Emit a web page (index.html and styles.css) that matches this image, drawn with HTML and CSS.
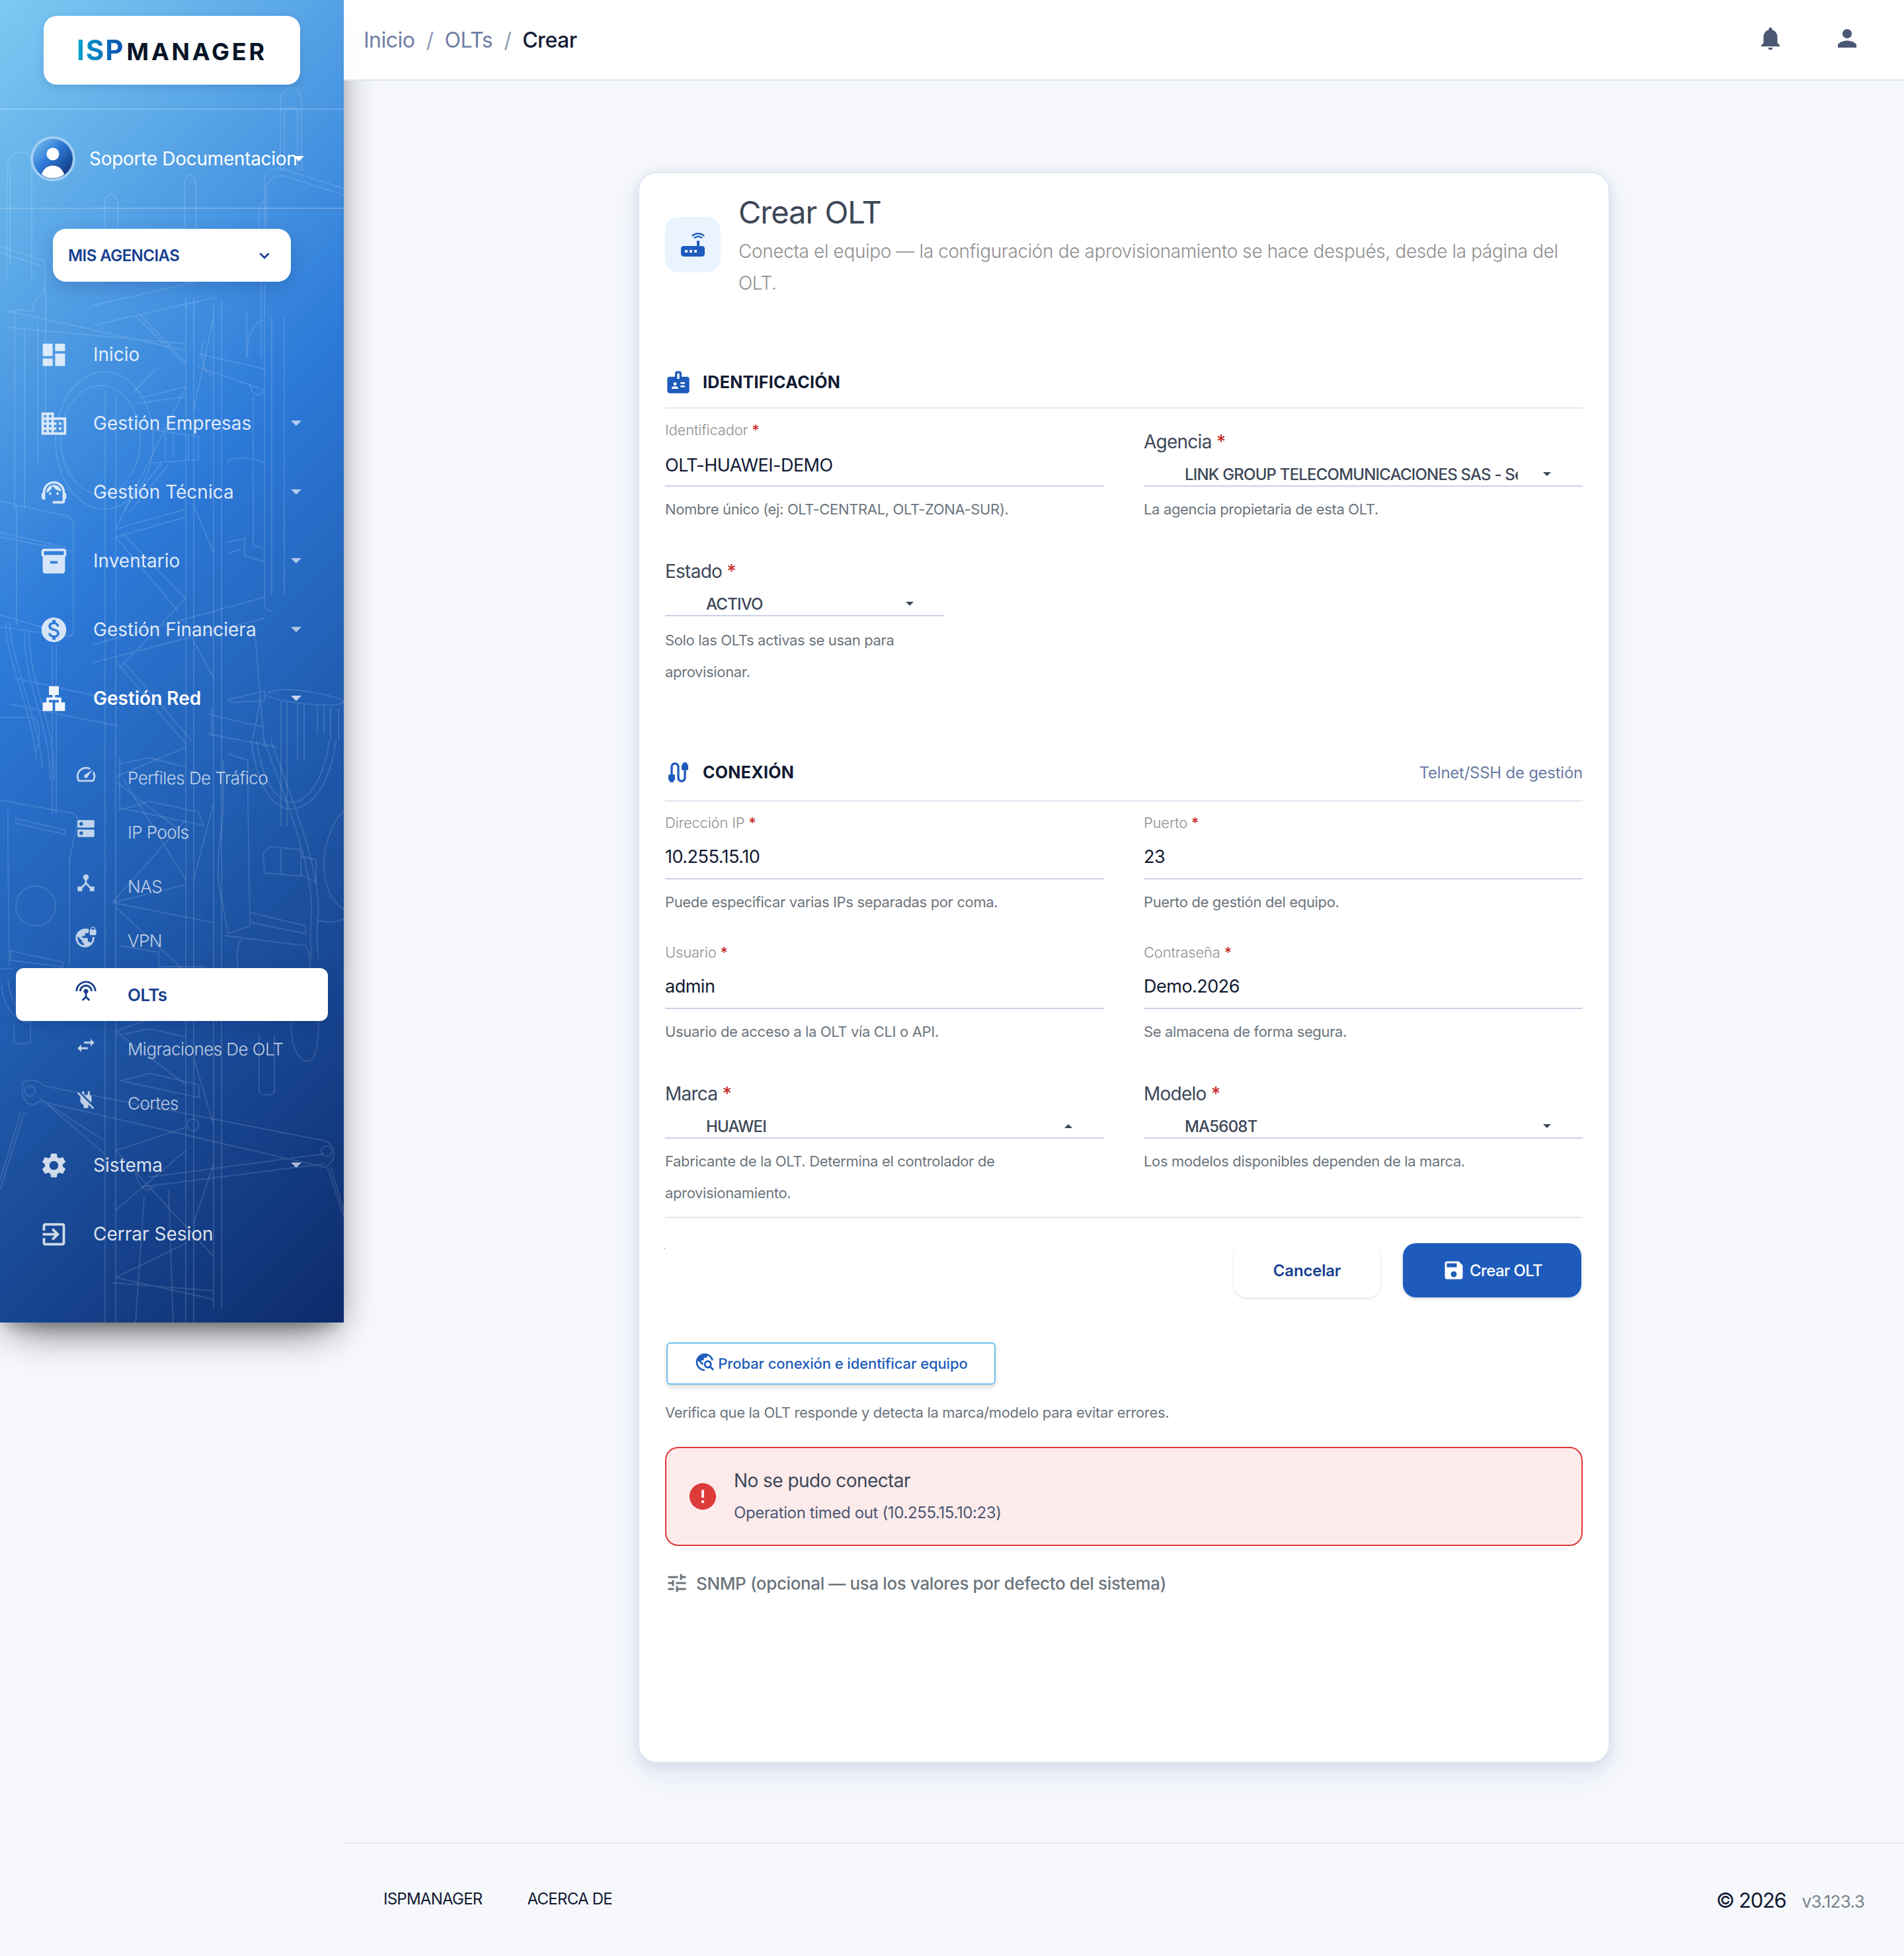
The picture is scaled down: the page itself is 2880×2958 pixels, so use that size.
FILE: index.html
```html
<!DOCTYPE html>
<html lang="es">
<head>
<meta charset="UTF-8">
<meta name="viewport" content="width=device-width, initial-scale=1.0">
<title>Crear OLT</title>
<link rel="stylesheet" href="styles.css">
</head>
<body>

<div class="wrapper">
  <aside class="sidebar">
    <!-- tower line art -->
    <svg class="sidebar-art" viewBox="0 0 520 2000">
      <path d="M159 590V2000M175 600V2000M281 450V2000M293 450V2000M323 460V1980M335 455V1980"/>
      <path d="M140 462L322 420M140 492L325 450M205 478L281 552M212 476L281 548M281 585L175 800M175 800L281 770M176 812L281 782M175 812L270 925M184 806L281 905M293 765L323 835M293 620L323 480M281 905L181 1010M140 975L400 903M140 1002L400 935M175 1000L281 1125M186 1000L290 1120M323 1025L293 970M175 1175L281 1130M175 1182L281 1262M186 1178L281 1330M281 1240L170 1365M170 1365L281 1338M170 1365L323 1395M175 1372L281 1470M293 1330L323 1215M175 1560L281 1520M175 1560L281 1640M293 1600L323 1700M175 1740L281 1705M175 1740L323 1900M175 1932L281 1880M175 1932L323 1965M170 1940L323 1952M293 1850L323 1760M175 1830L281 1740"/>
      <path d="M181 1155L226 1146L281 1160M181 1225L226 1212L300 1228L308 1248L181 1222zM181 1145V1220M181 1430L240 1440V1462H312M181 1565L226 1556L281 1568M181 1635L226 1623L300 1640L302 1660L181 1634"/>
      <path d="M22 470V770M37 500V770M57 490V700M69 440V640M10 425C10 380 10 270 12 245C18 225 46 225 48 245V420M15 255V400M158 345V305C160 290 176 290 178 305V345M279 345V280C279 260 295 260 296 280V345M424 258V155C424 125 456 125 456 155V258M430 258V170C430 160 450 160 450 170V258"/>
      <path d="M400 345V270C405 255 420 252 430 256L520 285M403 345V282C408 268 420 264 430 266L520 295M392 345V320C392 310 398 305 400 303M0 372L68 395V440M0 382L62 402M10 470L281 530M10 495L281 520M10 475C30 460 60 480 50 462C60 440 70 450 66 430M300 535L400 558M300 555L400 590"/>
      <path d="M400 430V915C402 920 406 925 412 925M411 480V900M430 480V900M373 470V540M395 420V540M375 540C370 500 395 480 400 485M378 580C380 600 395 600 400 590M310 515C300 530 305 560 320 568M343 700C350 690 375 690 400 700M383 600V825L400 830M343 820L370 815V840L400 850M343 838L365 830"/>
      <ellipse cx="158" cy="666" rx="74" ry="104"/>
      <ellipse cx="152" cy="665" rx="60" ry="82"/>
      <path d="M230 650L300 660V695L230 700M250 655V695M262 655V693M285 657V695M245 700L188 770M255 702L196 775M200 595L236 558M210 602L281 585M205 610L281 600"/>
      <path d="M0 758L100 780C108 782 111 788 111 795V950C111 960 108 965 98 962L0 948M0 805L100 828M0 812L108 833M25 765V945"/>
      <path d="M8 940C10 1000 50 1080 55 1150M14 940C18 1000 58 1090 64 1160M37 955C36 1040 76 1090 76 1180M44 955C44 1040 84 1090 82 1180M79 975V1230M85 975V1230M0 930L110 962M20 1025L180 1060M15 1065L180 1098M0 1085H50C62 1090 60 1120 55 1135"/>
      <path d="M400 1048C400 1060 520 1075 520 1060M405 1048C430 1035 500 1050 520 1060M425 1060V1250M434 1060V1250M450 1065V1150M460 1065V1150M480 1065V1110M490 1065V1110M500 1070V1120M512 1070V1120M385 950L400 1130M395 1050L382 1120M315 1080L400 1100M315 1110L420 1130M320 1070V1115M345 1058L400 1045V1060L350 1062z"/>
      <path d="M380 1120C390 1200 420 1230 450 1222C490 1210 505 1150 508 1120M388 1120C398 1190 425 1220 450 1212C480 1200 495 1150 498 1120M400 1120C420 1180 460 1270 470 1350C475 1390 465 1400 472 1450M410 1120C430 1180 470 1270 480 1350C485 1390 475 1400 482 1450M478 1390C500 1400 520 1390 520 1390M520 1225C480 1270 480 1350 520 1375"/>
      <path d="M398 1290L408 1280L455 1285V1325L400 1320zM425 1284V1322M455 1295L478 1300V1335L455 1322M345 1140L375 1150V1210L378 1400L345 1412L330 1330V1300L338 1220V1150M378 1380L462 1400V1412L380 1395M340 1415L460 1430C470 1432 470 1460 468 1500M360 1464C356 1440 360 1425 366 1420M392 1564V1650M415 1564V1650M392 1650C395 1658 412 1658 416 1650M440 1545C440 1590 455 1605 465 1605C478 1605 482 1580 482 1545"/>
      <path d="M0 1210L110 1230C118 1232 118 1240 116 1250L105 1300V1460M12 1225V1280L14 1460M24 1238L98 1255V1262L24 1245zM16 1438L95 1455V1462L16 1452zM0 1465H20M2 1490C6 1530 30 1550 50 1545M12 1480C16 1520 30 1535 50 1532M21 1550V1575C24 1580 43 1580 46 1575V1545"/>
      <circle cx="54" cy="1370" r="30"/>
      <path d="M34 1640C36 1630 60 1632 66 1642L490 1725C510 1730 510 1760 490 1765L60 1665C44 1680 30 1660 34 1640M60 1660L158 1745M70 1668L158 1725M225 1780L490 1745M215 1795L490 1760M205 1775C215 1810 230 1800 235 1790M32 1680L0 1785M37 1682L0 1800M495 1765L520 1840M500 1765L520 1830M218 1810L205 2000M255 1800L262 2000"/>
      <circle cx="45" cy="1650" r="8"/>
      <circle cx="494" cy="1741" r="8"/>
      <circle cx="292" cy="1701" r="9"/>
    </svg>

    <div class="logo">
      <div class="logo-box"><span class="logo-isp">ISP</span><span class="logo-manager">MANAGER</span></div>
    </div>

    <div class="user">
      <svg class="avatar" viewBox="0 0 68 68">
        <defs>
          <linearGradient id="av" x1="0" y1="0" x2="1" y2="1">
            <stop offset="0" stop-color="#7ecaf2"/>
            <stop offset=".45" stop-color="#2d78d6"/>
            <stop offset="1" stop-color="#0d2a6b"/>
          </linearGradient>
          <clipPath id="avclip"><circle cx="34" cy="34" r="29.5"/></clipPath>
        </defs>
        <circle cx="34" cy="34" r="34" fill="#a2cdf2"/>
        <circle cx="34" cy="34" r="30" fill="url(#av)"/>
        <g clip-path="url(#avclip)" fill="#fff">
          <circle cx="34" cy="27" r="9.5"/>
          <circle cx="34" cy="62" r="17.5"/>
        </g>
      </svg>
      <span class="user-name">Soporte Documentacion</span>
      <b class="caret"></b>
    </div>

    <div class="agency-btn">
      <span>MIS AGENCIAS</span>
      <svg viewBox="0 0 16 10"><path d="M2 2l6 6 6-6" fill="none" stroke="#173f91" stroke-width="2.4"/></svg>
    </div>

    <nav class="menu">
      <a class="item"><svg viewBox="0 0 24 24"><path d="M3 13h8V3H3v10zm0 8h8v-6H3v6zm10 0h8V11h-8v10zm0-18v6h8V3h-8z"/></svg><span>Inicio</span></a>
      <a class="item"><svg viewBox="0 0 24 24"><path d="M12 7V3H2v18h20V7H12zM6 19H4v-2h2v2zm0-4H4v-2h2v2zm0-4H4V9h2v2zm0-4H4V5h2v2zm4 12H8v-2h2v2zm0-4H8v-2h2v2zm0-4H8V9h2v2zm0-4H8V5h2v2zm10 12h-8v-2h2v-2h-2v-2h2v-2h-2V9h8v10zm-2-8h-2v2h2v-2zm0 4h-2v2h2v-2z"/></svg><span>Gestión Empresas</span><b class="caret"></b></a>
      <a class="item"><svg viewBox="0 0 24 24"><path d="M21 12.22C21 6.73 16.74 3 12 3c-4.69 0-9 3.65-9 9.28-.6.34-1 .98-1 1.72v2c0 1.1.9 2 2 2h1v-6.1c0-3.87 3.13-7 7-7s7 3.13 7 7V19h-8v2h8c1.1 0 2-.9 2-2v-1.22c.59-.31 1-.92 1-1.64v-2.3c0-.7-.41-1.31-1-1.62z"/><circle cx="9" cy="13" r="1"/><circle cx="15" cy="13" r="1"/><path d="M18 11.03C17.52 8.18 15.04 6 12.05 6c-3.03 0-6.29 2.51-6.03 6.45 2.47-1.01 4.33-3.21 4.86-5.89 1.31 2.63 4 4.44 7.12 4.47z"/></svg><span>Gestión Técnica</span><b class="caret"></b></a>
      <a class="item"><svg viewBox="0 0 24 24"><path d="M20 2H4c-1 0-2 .9-2 2v3.01c0 .72.43 1.34 1 1.69V20c0 1.1 1.1 2 2 2h14c.9 0 2-.9 2-2V8.7c.57-.35 1-.97 1-1.69V4c0-1.1-1-2-2-2zm-5 12H9v-2h6v2zm5-7H4V4h16v3z"/></svg><span>Inventario</span><b class="caret"></b></a>
      <a class="item"><svg viewBox="0 0 24 24"><path d="M12 2C6.48 2 2 6.48 2 12s4.48 10 10 10 10-4.48 10-10S17.52 2 12 2zm1.41 16.09V20h-2.67v-1.93c-1.71-.36-3.16-1.46-3.27-3.4h1.96c.1 1.05.82 1.87 2.65 1.87 1.96 0 2.4-.98 2.4-1.59 0-.83-.44-1.61-2.67-2.14-2.48-.6-4.18-1.62-4.18-3.67 0-1.72 1.39-2.84 3.11-3.21V4h2.67v1.95c1.86.45 2.79 1.86 2.85 3.39H14.3c-.05-1.11-.64-1.87-2.22-1.87-1.5 0-2.4.68-2.4 1.64 0 .84.65 1.39 2.67 1.91s4.18 1.39 4.18 3.91c-.01 1.83-1.38 2.83-3.12 3.16z"/></svg><span>Gestión Financiera</span><b class="caret"></b></a>
      <a class="item open"><svg viewBox="0 0 24 24"><path d="M13 22h8v-7h-3v-4h-5V9h3V2H8v7h3v2H6v4H3v7h8v-7H8v-2h8v2h-3z"/></svg><span>Gestión Red</span><b class="caret"></b></a>
      <div class="submenu">
        <a class="subitem"><svg viewBox="0 0 24 24"><path d="M20.38 8.57l-1.23 1.85a8 8 0 0 1-.22 7.58H5.07A8 8 0 0 1 15.58 6.85l1.85-1.23A10 10 0 0 0 3.35 19a2 2 0 0 0 1.72 1h13.85a2 2 0 0 0 1.74-1 10 10 0 0 0-.27-10.44z"/><path d="M10.59 15.41a2 2 0 0 0 2.83 0l5.66-8.49-8.49 5.66a2 2 0 0 0 0 2.83z"/></svg><span>Perfiles De Tráfico</span></a>
        <a class="subitem"><svg viewBox="0 0 24 24"><path d="M20 13H4c-.55 0-1 .45-1 1v6c0 .55.45 1 1 1h16c.55 0 1-.45 1-1v-6c0-.55-.45-1-1-1zM7 19c-1.1 0-2-.9-2-2s.9-2 2-2 2 .9 2 2-.9 2-2 2zM20 3H4c-.55 0-1 .45-1 1v6c0 .55.45 1 1 1h16c.55 0 1-.45 1-1V4c0-.55-.45-1-1-1zM7 9c-1.1 0-2-.9-2-2s.9-2 2-2 2 .9 2 2-.9 2-2 2z"/></svg><span>IP Pools</span></a>
        <a class="subitem"><svg viewBox="0 0 24 24"><path d="M17 16l-4-4V8.82C14.16 8.4 15 7.3 15 6c0-1.66-1.34-3-3-3S9 4.34 9 6c0 1.3.84 2.4 2 2.82V12l-4 4H3v5h5v-3.05l4-4.2 4 4.2V21h5v-5h-4z"/></svg><span>NAS</span></a>
        <a class="subitem"><svg viewBox="0 0 24 24"><path d="M22 4v-.5C22 2.12 20.88 1 19.5 1S17 2.12 17 3.5V4c-.55 0-1 .45-1 1v4c0 .55.45 1 1 1h5c.55 0 1-.45 1-1V5c0-.55-.45-1-1-1zm-.8 0h-3.4v-.5c0-.94.76-1.7 1.7-1.7s1.7.76 1.7 1.7V4zm-2.28 8c.04.33.08.66.08 1 0 2.08-.8 3.97-2.1 5.39-.26-.81-1-1.39-1.9-1.39h-1v-3c0-.55-.45-1-1-1H8v-2h2c.55 0 1-.45 1-1V8h2c1.1 0 2-.9 2-2V3.46c-.95-.3-1.95-.46-3-.46C5.48 3 1 7.48 1 13s4.48 10 10 10 10-4.48 10-10c0-.34-.02-.67-.05-1h-2.03zM10 20.93c-3.95-.49-7-3.85-7-7.93 0-.62.08-1.21.21-1.79L8 16v1c0 1.1.9 2 2 2v1.93z"/></svg><span>VPN</span></a>
        <a class="subitem active"><svg viewBox="0 0 24 24"><path d="M12 5c-3.87 0-7 3.13-7 7h2c0-2.76 2.24-5 5-5s5 2.24 5 5h2c0-3.87-3.13-7-7-7zm1 9.29c.88-.39 1.5-1.26 1.5-2.29 0-1.38-1.12-2.5-2.5-2.5S9.5 10.62 9.5 12c0 1.02.62 1.9 1.5 2.29v3.3L7.59 21 9 22.41l3-3 3 3L16.41 21 13 17.59v-3.3zM12 1C5.93 1 1 5.93 1 12h2c0-4.97 4.03-9 9-9s9 4.03 9 9h2c0-6.07-4.93-11-11-11z"/></svg><span>OLTs</span></a>
        <a class="subitem"><svg viewBox="0 0 24 24"><path d="M6.99 11L3 15l3.99 4v-3H14v-2H6.99v-3zM21 9l-3.99-4v3H10v2h7.01v3L21 9z"/></svg><span>Migraciones De OLT</span></a>
        <a class="subitem"><svg viewBox="0 0 24 24"><path d="M18 14.49V9c0-1-1.01-2.01-2-2V3h-2v4h-4V3H8v2.48l9.51 9.5.49-.49zm-1.76 1.77L7.2 7.2l-.01.01L3.98 4 2.71 5.25l3.36 3.36C6.04 8.74 6 8.87 6 9v5.48L9.5 18v3h5v-3l.48-.48L19.45 22l1.26-1.28-4.47-4.46z"/></svg><span>Cortes</span></a>
      </div>
      <a class="item"><svg viewBox="0 0 24 24"><path d="M19.14 12.94c.04-.3.06-.61.06-.94 0-.32-.02-.64-.07-.94l2.03-1.58c.18-.14.23-.41.12-.61l-1.92-3.32c-.12-.22-.37-.29-.59-.22l-2.39.96c-.5-.38-1.03-.7-1.62-.94l-.36-2.54c-.04-.24-.24-.41-.48-.41h-3.84c-.24 0-.43.17-.47.41l-.36 2.54c-.59.24-1.13.57-1.62.94l-2.39-.96c-.22-.08-.47 0-.59.22L2.74 8.87c-.12.21-.08.47.12.61l2.03 1.58c-.05.3-.09.63-.09.94s.02.64.07.94l-2.03 1.58c-.18.14-.23.41-.12.61l1.92 3.32c.12.22.37.29.59.22l2.39-.96c.5.38 1.03.7 1.62.94l.36 2.54c.05.24.24.41.48.41h3.84c.24 0 .44-.17.47-.41l.36-2.54c.59-.24 1.13-.56 1.62-.94l2.39.96c.22.08.47 0 .59-.22l1.92-3.32c.12-.22.07-.47-.12-.61l-2.01-1.58zM12 15.6c-1.98 0-3.6-1.62-3.6-3.6s1.62-3.6 3.6-3.6 3.6 1.62 3.6 3.6-1.62 3.6-3.6 3.6z"/></svg><span>Sistema</span><b class="caret"></b></a>
      <a class="item"><svg viewBox="0 0 24 24"><path d="M10.09 15.59L11.5 17l5-5-5-5-1.41 1.41L12.67 11H3v2h9.67l-2.58 2.59zM19 3H5c-1.11 0-2 .9-2 2v4h2V5h14v14H5v-4H3v4c0 1.1.89 2 2 2h14c1.1 0 2-.9 2-2V5c0-1.1-.9-2-2-2z"/></svg><span>Cerrar Sesion</span></a>
    </nav>
  </aside>

  <div class="main">
    <header class="topbar">
      <div class="breadcrumb">
        <a>Inicio</a><i>/</i><a>OLTs</a><i>/</i><span class="current">Crear</span>
      </div>
      <div class="topbar-icons">
        <svg viewBox="0 0 24 24"><path d="M12 22c1.1 0 2-.9 2-2h-4c0 1.1.89 2 2 2zm6-6v-5c0-3.07-1.64-5.64-4.5-6.32V4c0-.83-.67-1.5-1.5-1.5s-1.5.67-1.5 1.5v.68C7.63 5.36 6 7.92 6 11v5l-2 2v1h16v-1l-2-2z"/></svg>
        <svg viewBox="0 0 24 24"><path d="M12 12c2.21 0 4-1.79 4-4s-1.79-4-4-4-4 1.79-4 4 1.79 4 4 4zm0 2c-2.67 0-8 1.34-8 4v2h16v-2c0-2.66-5.33-4-8-4z"/></svg>
      </div>
    </header>

    <form class="card">
      <div class="card-header">
        <div class="card-icon">
          <svg viewBox="0 0 24 24"><path d="M20.2 5.9l.8-.8C19.6 3.7 17.8 3 16 3s-3.6.7-5 2.1l.8.8C13 4.8 14.5 4.2 16 4.2s3 .6 4.2 1.7zm-.9.8c-.9-.9-2.1-1.4-3.3-1.4s-2.4.5-3.3 1.4l.8.8c.7-.7 1.6-1 2.5-1 .9 0 1.8.3 2.5 1l.8-.8zM19 13h-2V9h-2v4H5c-1.1 0-2 .9-2 2v4c0 1.1.9 2 2 2h14c1.1 0 2-.9 2-2v-4c0-1.1-.9-2-2-2zM8 18H6v-2h2v2zm3.5 0h-2v-2h2v2zm3.5 0h-2v-2h2v2z"/></svg>
        </div>
        <div>
          <h1>Crear OLT</h1>
          <p class="subtitle">Conecta el equipo — la configuración de aprovisionamiento se hace después, desde la página del<br>OLT.</p>
        </div>
      </div>

      <div class="section-head">
        <svg viewBox="0 0 24 24"><path d="M20 7h-5V4c0-1.1-.9-2-2-2h-2c-1.1 0-2 .9-2 2v3H4c-1.1 0-2 .9-2 2v11c0 1.1.9 2 2 2h16c1.1 0 2-.9 2-2V9c0-1.1-.9-2-2-2zM9 12c.83 0 1.5.67 1.5 1.5S9.83 15 9 15s-1.5-.67-1.5-1.5S8.17 12 9 12zm3 6H6v-.75c0-1 2-1.5 3-1.5s3 .5 3 1.5V18zm1-9h-2V4h2v5zm5 7.5h-4V15h4v1.5zm0-3h-4V12h4v1.5z"/></svg>
        <h2>IDENTIFICACIÓN</h2>
      </div>
      <div class="fields">
        <div class="field">
          <label>Identificador <em>*</em></label>
          <div class="input">OLT-HUAWEI-DEMO</div>
          <p class="help">Nombre único (ej: OLT-CENTRAL, OLT-ZONA-SUR).</p>
        </div>
        <div class="field">
          <label class="big">Agencia <em>*</em></label>
          <div class="select"><span>LINK GROUP TELECOMUNICACIONES SAS - Sede</span><b class="caret"></b></div>
          <p class="help">La agencia propietaria de esta OLT.</p>
        </div>
        <div class="field narrow">
          <label class="big">Estado <em>*</em></label>
          <div class="select"><span>ACTIVO</span><b class="caret"></b></div>
          <p class="help">Solo las OLTs activas se usan para<br>aprovisionar.</p>
        </div>
      </div>

      <div class="section-head tall">
        <svg viewBox="0 0 24 24"><path d="M20 5V4c0-.55-.45-1-1-1h-2c-.55 0-1 .45-1 1v1h-1v4c0 .55.45 1 1 1h1v7c0 1.1-.9 2-2 2s-2-.9-2-2V7c0-2.21-1.79-4-4-4S5 4.79 5 7v7H4c-.55 0-1 .45-1 1v4h1v1c0 .55.45 1 1 1h2c.55 0 1-.45 1-1v-1h1v-4c0-.55-.45-1-1-1H7V7c0-1.1.9-2 2-2s2 .9 2 2v10c0 2.21 1.79 4 4 4s4-1.79 4-4v-7h1c.55 0 1-.45 1-1V5h-1z"/></svg>
        <h2>CONEXIÓN</h2>
        <span class="section-note">Telnet/SSH de gestión</span>
      </div>
      <div class="fields connection">
        <div class="field">
          <label>Dirección IP <em>*</em></label>
          <div class="input">10.255.15.10</div>
          <p class="help">Puede especificar varias IPs separadas por coma.</p>
        </div>
        <div class="field">
          <label>Puerto <em>*</em></label>
          <div class="input">23</div>
          <p class="help">Puerto de gestión del equipo.</p>
        </div>
        <div class="field">
          <label>Usuario <em>*</em></label>
          <div class="input">admin</div>
          <p class="help">Usuario de acceso a la OLT vía CLI o API.</p>
        </div>
        <div class="field">
          <label>Contraseña <em>*</em></label>
          <div class="input">Demo.2026</div>
          <p class="help">Se almacena de forma segura.</p>
        </div>
        <div class="field">
          <label class="big">Marca <em>*</em></label>
          <div class="select"><span>HUAWEI</span><b class="caret up"></b></div>
          <p class="help">Fabricante de la OLT. Determina el controlador de<br>aprovisionamiento.</p>
        </div>
        <div class="field">
          <label class="big">Modelo <em>*</em></label>
          <div class="select"><span>MA5608T</span><b class="caret"></b></div>
          <p class="help">Los modelos disponibles dependen de la marca.</p>
        </div>
      </div>

      <div class="actions">
        <button type="button" class="btn btn-cancel">Cancelar</button>
        <button type="button" class="btn btn-primary"><svg viewBox="0 0 24 24"><path d="M17 3H5c-1.11 0-2 .9-2 2v14c0 1.1.89 2 2 2h14c1.1 0 2-.9 2-2V7l-4-4zm-5 16c-1.66 0-3-1.34-3-3s1.34-3 3-3 3 1.34 3 3-1.34 3-3 3zm3-10H5V5h10v4z"/></svg><span>Crear OLT</span></button>
      </div>

      <button type="button" class="btn-test"><svg viewBox="0 0 24 24"><path d="M19.3 16.9c.4-.7.7-1.5.7-2.4 0-2.5-2-4.5-4.5-4.5S11 12 11 14.5s2 4.5 4.5 4.5c.9 0 1.7-.3 2.4-.7l3.2 3.2 1.4-1.4-3.2-3.2zm-3.8.1c-1.4 0-2.5-1.1-2.5-2.5s1.1-2.5 2.5-2.5 2.5 1.1 2.5 2.5-1.1 2.5-2.5 2.5zM12 20v2C6.48 22 2 17.52 2 12S6.48 2 12 2c4.84 0 8.87 3.44 9.8 8h-2.07c-.64-2.46-2.4-4.47-4.73-5.41V5c0 1.1-.9 2-2 2h-2v2c0 .55-.45 1-1 1H8v2h2v3H9l-4.79-4.79C4.08 10.79 4 11.38 4 12c0 4.41 3.59 8 8 8z"/></svg><span>Probar conexión e identificar equipo</span></button>
      <p class="help test-help">Verifica que la OLT responde y detecta la marca/modelo para evitar errores.</p>

      <div class="alert">
        <svg viewBox="0 0 24 24"><path d="M12 2C6.48 2 2 6.48 2 12s4.48 10 10 10 10-4.48 10-10S17.52 2 12 2zm1 15h-2v-2h2v2zm0-4h-2V7h2v6z"/></svg>
        <div>
          <p class="alert-title">No se pudo conectar</p>
          <p class="alert-text">Operation timed out (10.255.15.10:23)</p>
        </div>
      </div>

      <div class="snmp">
        <svg viewBox="0 0 24 24"><path d="M3 17v2h6v-2H3zM3 5v2h10V5H3zm10 16v-2h8v-2h-8v-2h-2v6h2zM7 9v2H3v2h4v2h2V9H7zm14 4v-2H11v2h10zm-6-4h2V7h4V5h-4V3h-2v6z"/></svg>
        <span>SNMP (opcional — usa los valores por defecto del sistema)</span>
      </div>
    </form>

    <footer class="footer">
      <div class="footer-links"><a>ISPMANAGER</a><a>ACERCA DE</a></div>
      <div class="copyright"><span>© 2026</span><small>v3.123.3</small></div>
    </footer>
  </div>
</div>

</body>
</html>
```
FILE: styles.css
```css
* {
  box-sizing: border-box;
}
body {
  margin: 0;
  background-color: #f6f8fc;
  font-family: Inter, "Open Sans", sans-serif;
  font-size: 28px;
  color: #3c4858;
}
h1, h2, p {
  margin: 0;
}
em, i {
  font-style: normal;
}
.wrapper {
  display: flex;
  align-items: flex-start;
}
.caret {
  width: 0;
  height: 0;
  border: 8px solid transparent;
  border-top-color: currentColor;
  border-bottom: 0;
}

/* Sidebar */
.sidebar {
  position: relative;
  flex: none;
  width: 520px;
  height: 2000px;
  color: #fff;
  background: linear-gradient(135deg, #7ecaf2 0%, #2d7ad9 40%, #1f59ab 65%, #0d2a6b 100%);
  box-shadow: 0 32px 60px -24px rgba(0, 0, 0, .56), 0 8px 50px 0 rgba(0, 0, 0, .14), 0 16px 20px -10px rgba(0, 0, 0, .2);
}
.sidebar > * {
  position: relative;
}
.sidebar .sidebar-art {
  position: absolute;
  top: 0;
  left: 0;
  width: 520px;
  height: 2000px;
  fill: none;
  stroke: rgba(255, 255, 255, .12);
  stroke-width: 2;
}
.logo {
  height: 166px;
  padding: 24px 66px 0;
  border-bottom: 2px solid rgba(255, 255, 255, .2);
}
.logo-box {
  display: flex;
  align-items: baseline;
  justify-content: center;
  height: 104px;
  line-height: 104px;
  border-radius: 20px;
  background: #fff;
  box-shadow: 0 4px 12px rgba(13, 42, 107, .15);
  font-weight: 700;
}
.logo-isp {
  font-size: 42px;
  letter-spacing: 2px;
  background: linear-gradient(90deg, #06a6cc, #0a4bab);
  -webkit-background-clip: text;
  background-clip: text;
  color: transparent;
}
.logo-manager {
  margin-left: 3px;
  font-size: 36px;
  letter-spacing: 3.8px;
  color: #071426;
}
.user {
  display: flex;
  align-items: center;
  height: 150px;
  padding-left: 46px;
  border-bottom: 2px solid rgba(255, 255, 255, .2);
}
.avatar {
  width: 68px;
  height: 68px;
  margin-right: 21px;
}
.user-name {
  width: 309px;
  letter-spacing: -.3px;
  white-space: nowrap;
}
.agency-btn {
  display: flex;
  align-items: center;
  justify-content: space-between;
  height: 80px;
  margin: 30px 80px 58px;
  padding: 0 31px 0 23px;
  border-radius: 20px;
  background: #fff;
  box-shadow: 0 8px 24px rgba(13, 42, 107, .2);
  color: #173f91;
  font-size: 24px;
  font-weight: 600;
  letter-spacing: -.55px;
}
.agency-btn svg {
  width: 18px;
  height: 11px;
}
.item {
  display: flex;
  align-items: center;
  height: 104px;
  padding: 0 64px 0 59px;
  color: rgba(255, 255, 255, .86);
}
.item svg {
  width: 45px;
  height: 45px;
  margin-right: 37px;
  fill: currentColor;
  opacity: .93;
}
.item .caret {
  margin-left: auto;
  opacity: .75;
}
.item.open {
  color: #fff;
  font-weight: 600;
}
.submenu {
  padding: 28px 24px 0;
}
.subitem {
  display: flex;
  align-items: center;
  height: 80px;
  margin-bottom: 2px;
  padding-left: 89px;
  border-radius: 12px;
  color: rgba(255, 255, 255, .72);
  font-size: 26px;
  font-weight: 300;
  letter-spacing: -.55px;
}
.subitem svg {
  width: 34px;
  height: 34px;
  margin: 0 46px 11px 0;
  fill: currentColor;
}
.subitem.active {
  background: #fff;
  box-shadow: 0 8px 20px rgba(13, 42, 107, .25);
  color: #173f91;
  font-weight: 600;
}

/* Topbar */
.main {
  flex: 1;
}
.topbar {
  position: relative;
  display: flex;
  align-items: center;
  justify-content: space-between;
  height: 122px;
  padding: 0 65px 0 30px;
  background: rgba(255, 255, 255, .95);
  border-bottom: 2px solid #dfe6ee;
}
.breadcrumb {
  display: flex;
  font-size: 32px;
  letter-spacing: -.5px;
  color: #6f7ea3;
}
.breadcrumb i {
  width: 45px;
  text-align: center;
  color: #8f9bb8;
}
.breadcrumb .current {
  color: #111a33;
  font-weight: 500;
}
.topbar-icons {
  display: flex;
  gap: 74px;
  padding-bottom: 4px;
}
.topbar-icons svg {
  width: 42px;
  height: 42px;
  fill: #4b5873;
}

/* Card */
.card {
  width: 1470px;
  height: 2406px;
  margin: 138px auto 120px;
  padding: 26px 39px 0;
  background: #fff;
  border: 2px solid #e2e8f2;
  border-radius: 28px;
  box-shadow: 0 16px 48px rgba(30, 70, 150, .1), 0 4px 16px rgba(30, 50, 110, .1);
}
.card-header {
  display: flex;
  align-items: center;
  gap: 27px;
  margin-bottom: 88px;
}
.card-icon {
  display: flex;
  align-items: center;
  justify-content: center;
  width: 84px;
  height: 84px;
  border-radius: 20px;
  background: #e9f4fe;
}
.card-icon svg {
  width: 48px;
  height: 48px;
  fill: #1e5bbb;
}
h1 {
  margin-bottom: 2px;
  font-size: 47px;
  font-weight: 400;
  letter-spacing: -1px;
  line-height: 66px;
}
.subtitle {
  font-size: 28px;
  font-weight: 300;
  letter-spacing: -.38px;
  line-height: 48px;
  color: #8f8f8f;
  white-space: nowrap;
}
.section-head {
  display: flex;
  align-items: center;
  height: 78px;
  border-bottom: 2px solid #e2e8f2;
}
.section-head.tall {
  height: 86px;
  margin-top: 88px;
}
.section-head svg {
  width: 40px;
  height: 40px;
  margin-right: 17px;
  fill: #1e5bbb;
}
h2 {
  font-size: 25px;
  font-weight: 700;
  letter-spacing: .3px;
  color: #111a33;
}
.section-note {
  margin-left: auto;
  font-size: 24px;
  letter-spacing: -.25px;
  color: #6b7aa3;
}
.fields {
  display: grid;
  grid-template-columns: 664px 664px;
  grid-auto-rows: 196px;
  column-gap: 60px;
  padding-bottom: 28px;
}
.field label {
  display: block;
  height: 60px;
  padding-top: 12px;
  font-size: 22px;
  font-weight: 300;
  letter-spacing: -.2px;
  line-height: 40px;
  color: #8f8f8f;
}
.field label em {
  color: #c62828;
  font-weight: 500;
}
.field label.big {
  height: 80px;
  padding-top: 26px;
  font-size: 28px;
  font-weight: 400;
  letter-spacing: -.75px;
  line-height: 48px;
  color: #3c4858;
}
.input {
  height: 58px;
  border-bottom: 2px solid #c9d3e3;
  font-size: 27px;
  letter-spacing: -.5px;
  line-height: 52px;
  color: #111a33;
}
.connection .input {
  line-height: 48px;
}
.select {
  display: flex;
  justify-content: space-between;
  height: 38px;
  padding: 0 48px 0 62px;
  border-bottom: 2px solid #c9d3e3;
  font-size: 24px;
  font-weight: 500;
  letter-spacing: -.8px;
  line-height: 39px;
}
.select span {
  max-width: 504px;
  overflow: hidden;
  white-space: nowrap;
}
.select .caret {
  margin-top: 16px;
  border-width: 6px 6px 0;
}
.select .caret.up {
  border: 6px solid transparent;
  border-top: 0;
  border-bottom-color: currentColor;
}
.narrow {
  width: 422px;
}
.narrow .select {
  padding-right: 46px;
}
.help {
  margin-top: 10px;
  font-size: 22px;
  letter-spacing: -.35px;
  line-height: 48px;
  color: #6c757d;
  white-space: nowrap;
}
.narrow .help {
  margin-top: 12px;
}
.actions {
  display: flex;
  justify-content: flex-end;
  gap: 34px;
  height: 190px;
  margin-top: 12px;
  padding: 38px 2px 0 0;
  border-top: 2px solid #e2e8f2;
}
.actions::before {
  content: "";
  width: 2px;
  height: 2px;
  margin: 7px auto 0 -2px;
  background: #c3c8cf;
}
button {
  font-family: inherit;
  border: 0;
  padding: 0;
}
.btn {
  display: flex;
  align-items: center;
  justify-content: center;
  gap: 6px;
  height: 82px;
  border-radius: 20px;
  font-size: 24px;
  font-weight: 500;
}
.btn-cancel {
  width: 222px;
  background: #fff;
  color: #173f91;
  font-weight: 600;
  letter-spacing: -.2px;
  box-shadow: 0 2px 4px rgba(30, 50, 110, .12);
}
.btn-primary {
  width: 270px;
  background: #1e5bbb;
  color: #fff;
  letter-spacing: -.6px;
  box-shadow: 0 2px 5px rgba(30, 50, 110, .2);
}
.btn svg {
  width: 36px;
  height: 36px;
  fill: currentColor;
}
.btn-test {
  display: flex;
  align-items: center;
  justify-content: center;
  gap: 4px;
  width: 498px;
  height: 64px;
  margin-left: 2px;
  border: 2px solid #6fc1ef;
  border-radius: 6px;
  background: #fff;
  box-shadow: 0 4px 6px rgba(0, 0, 0, .14);
  color: #1e5bbb;
  font-size: 22px;
  font-weight: 500;
  letter-spacing: -.1px;
}
.btn-test svg {
  width: 32px;
  height: 32px;
  margin-bottom: 4px;
  fill: currentColor;
}
.test-help {
  margin: 18px 0 28px;
}
.alert {
  display: flex;
  align-items: center;
  gap: 23px;
  height: 150px;
  padding-left: 31px;
  border: 2px solid #dd3a3a;
  border-radius: 20px;
  background: #fdebeb;
}
.alert svg {
  width: 48px;
  height: 48px;
  fill: #dd3a3a;
}
.alert-title {
  letter-spacing: -.55px;
  line-height: 50px;
}
.alert-text {
  font-size: 24px;
  letter-spacing: -.37px;
  line-height: 48px;
  color: #4b5873;
}
.snmp {
  display: flex;
  align-items: center;
  height: 48px;
  margin-top: 32px;
  font-size: 26px;
  font-weight: 500;
  letter-spacing: -.38px;
  color: #6c757d;
  white-space: nowrap;
}
.snmp svg {
  width: 36px;
  height: 36px;
  margin-right: 11px;
  fill: currentColor;
}

/* Footer */
.footer {
  display: flex;
  align-items: center;
  justify-content: space-between;
  height: 172px;
  padding: 0 60px;
  border-top: 2px solid #e7e9e9;
  color: #111a33;
}
.footer-links {
  display: flex;
  gap: 68px;
  padding-bottom: 4px;
  font-size: 24px;
  letter-spacing: -.75px;
}
.copyright {
  display: flex;
  align-items: baseline;
  gap: 24px;
  font-size: 31px;
  letter-spacing: -1.3px;
}
.copyright small {
  font-size: 26px;
  letter-spacing: -.7px;
  color: #7b848c;
}
```
